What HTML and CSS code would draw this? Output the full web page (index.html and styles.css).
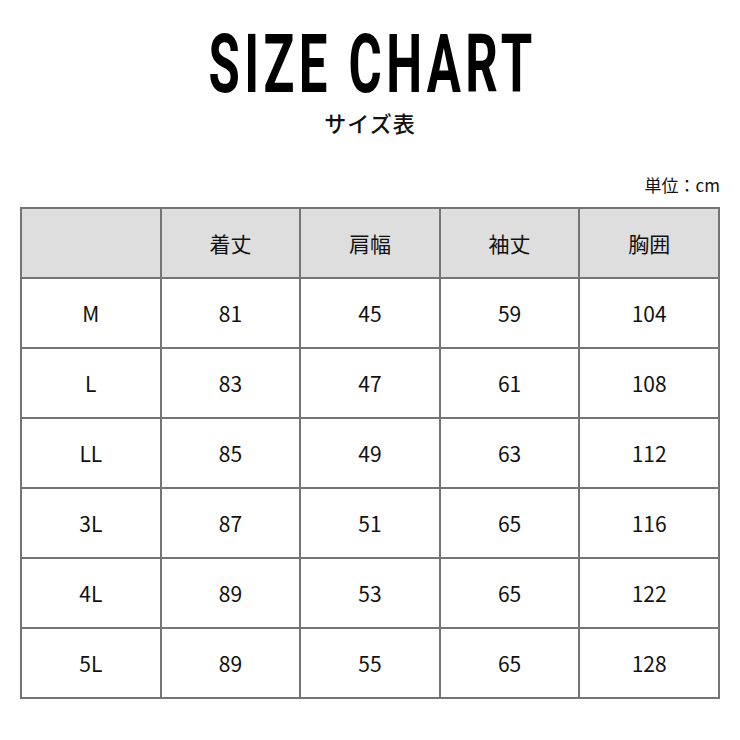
FILE: index.html
```html
<!DOCTYPE html>
<html lang="ja">
<head>
<meta charset="utf-8">
<link rel="stylesheet" href="styles.css">
</head>
<body>
<div class="page">
  <header class="head">
    <h1 class="title">SIZE CHART</h1>
    <p class="subtitle">サイズ表</p>
  </header>
  <p class="unit">単位：cm</p>
  <table class="chart">
    <thead>
      <tr><th></th><th>着丈</th><th>肩幅</th><th>袖丈</th><th>胸囲</th></tr>
    </thead>
    <tbody>
      <tr><td>M</td><td>81</td><td>45</td><td>59</td><td>104</td></tr>
      <tr><td>L</td><td>83</td><td>47</td><td>61</td><td>108</td></tr>
      <tr><td>LL</td><td>85</td><td>49</td><td>63</td><td>112</td></tr>
      <tr><td>3L</td><td>87</td><td>51</td><td>65</td><td>116</td></tr>
      <tr><td>4L</td><td>89</td><td>53</td><td>65</td><td>122</td></tr>
      <tr><td>5L</td><td>89</td><td>55</td><td>65</td><td>128</td></tr>
    </tbody>
  </table>
</div>
</body>
</html>
```
FILE: styles.css
```css
html, body {
  margin: 0;
  padding: 0;
  background: #fff;
}
.page {
  width: 740px;
  height: 740px;
  padding: 0 20px;
  box-sizing: border-box;
  font-family: "Noto Sans CJK JP", "Noto Sans", sans-serif;
  color: #111;
}
.head {
  display: flex;
  flex-direction: column;
  align-items: center;
  padding-top: 29px;
}
.title {
  margin: 0;
  padding-left: 10px;
  font-family: "Roboto", "Liberation Sans", sans-serif;
  font-weight: 700;
  font-size: 82px;
  line-height: 70px;
  letter-spacing: 7px;
  transform: scaleX(0.62);
  color: #000;
}
.subtitle {
  margin: 8px 0 0;
  font-size: 22px;
  line-height: 30px;
  font-weight: 500;
  letter-spacing: 1px;
}
.unit {
  margin: 36px 0 0;
  text-align: right;
  font-size: 17px;
  line-height: 24px;
}
.chart {
  margin-top: 10px;
  width: 700px;
  border-collapse: collapse;
  table-layout: fixed;
}
.chart th, .chart td {
  border: 2px solid #757575;
  height: 68px;
  padding: 0;
  text-align: center;
  font-size: 21px;
  font-weight: 400;
  color: #111;
}
.chart th {
  background: #dedede;
}
```
